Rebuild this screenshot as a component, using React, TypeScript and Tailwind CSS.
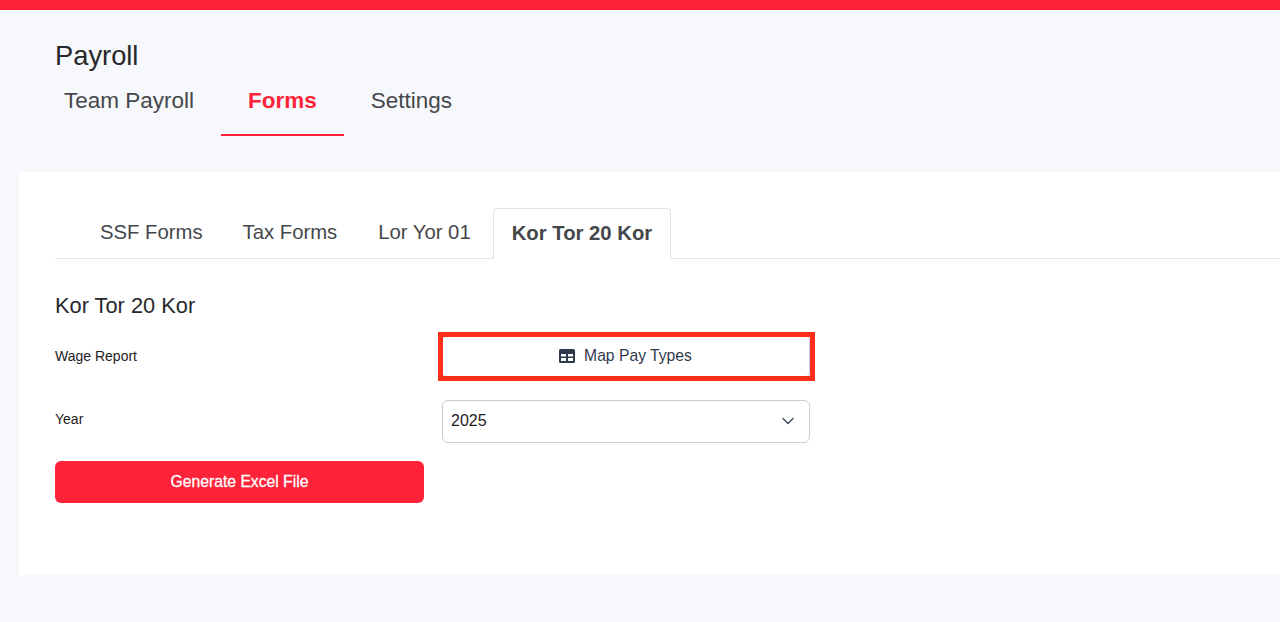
export default function App() {
  return (
    <div className="min-h-[622px] bg-[#f7f8fc] font-['Liberation_Sans',Arial,sans-serif] overflow-hidden">
      <div className="h-[10px] bg-[#fe2338]" />
      <div className="pl-[55px] pt-[28px]">
        <h1 className="text-[27.3px] leading-[36px] font-normal text-[#26282c]">Payroll</h1>
        <nav className="flex h-[62px] items-stretch text-[22.5px] leading-[26px] text-[#45474b]">
          <div className="pl-[9px] pr-[27px] pt-[14px]">Team Payroll</div>
          <div className="px-[27px] pt-[14px] font-bold text-[#fe2338] border-b-2 border-[#fe2338]">Forms</div>
          <div className="px-[27px] pt-[14px]">Settings</div>
        </nav>
      </div>
      <main className="mt-[36px] ml-[19px] h-[403px] bg-white pl-[36px] pt-[36px]">
        <div className="flex h-[51px] pl-[25px] border-b border-[#e3e4e8] text-[20.3px] text-[#45474b]">
          <div className="px-[20px] pt-[12px] leading-[24px]">SSF Forms</div>
          <div className="px-[20px] pt-[12px] leading-[24px]">Tax Forms</div>
          <div className="pl-[21px] pr-[22px] pt-[12px] leading-[24px]">Lor Yor 01</div>
          <div className="h-[51px] px-[18px] pt-[12px] leading-[24px] font-bold bg-white border border-b-0 border-[#e3e4e8] rounded-t-[4px]">Kor Tor 20 Kor</div>
        </div>
        <h2 className="mt-[33px] text-[21.8px] leading-[28px] font-normal text-[#26282c]">Kor Tor 20 Kor</h2>
        <div className="mt-[16px] grid grid-cols-[387px_368px] items-center">
          <div className="text-[14px] leading-[16px] pb-[2px] text-[#1f2024]">Wage Report</div>
          <div className="relative">
            <button className="w-full h-[41px] pb-[1px] pr-[1px] flex items-center justify-center gap-[9px] bg-white border border-[#c9cbd4] rounded-[4px] text-[15.7px] text-[#2f3a4d]">
              <svg width="16" height="14" viewBox="0 0 16 14" aria-hidden="true">
                <path fillRule="evenodd" fill="#2f3a4d" d="M1.500 0h13A1.500 1.500 0 0 1 16 1.500v11a1.500 1.500 0 0 1-1.500 1.500h-13A1.500 1.500 0 0 1 0 12.500v-11A1.500 1.500 0 0 1 1.500 0ZM2 5v2.500h5V5H2Zm7 0v2.500h5V5H9ZM2 9v3h5V9H2Zm7 0v3h5V9H9Z" />
              </svg>
              Map Pay Types
            </button>
            <div className="absolute -left-[4px] -right-[5px] -top-[4px] -bottom-[4px] border-[5px] border-[#ff2d1a]" />
          </div>
        </div>
        <div className="mt-[23px] grid grid-cols-[387px_368px] items-start">
          <div className="text-[14px] leading-[16px] pt-[11px] text-[#1f2024]">Year</div>
          <div className="h-[43px] pl-[8px] pr-[14px] pb-[1px] flex items-center justify-between bg-white border border-[#c9cbd4] rounded-[6px] text-[16px] text-[#1f2024]">
            2025
            <svg width="14" height="14" viewBox="0 0 14 14" fill="none" stroke="#4b5563" strokeWidth="1.600" strokeLinecap="round" strokeLinejoin="round" aria-hidden="true">
              <path d="M2 4.500l5 5 5-5" />
            </svg>
          </div>
        </div>
        <button className="mt-[18px] block w-[369px] h-[42px] bg-[#fe2338] rounded-[6px] text-[15.700px] [-webkit-text-stroke:0.3px_white] text-white">Generate Excel File</button>
      </main>
    </div>
  );
}
